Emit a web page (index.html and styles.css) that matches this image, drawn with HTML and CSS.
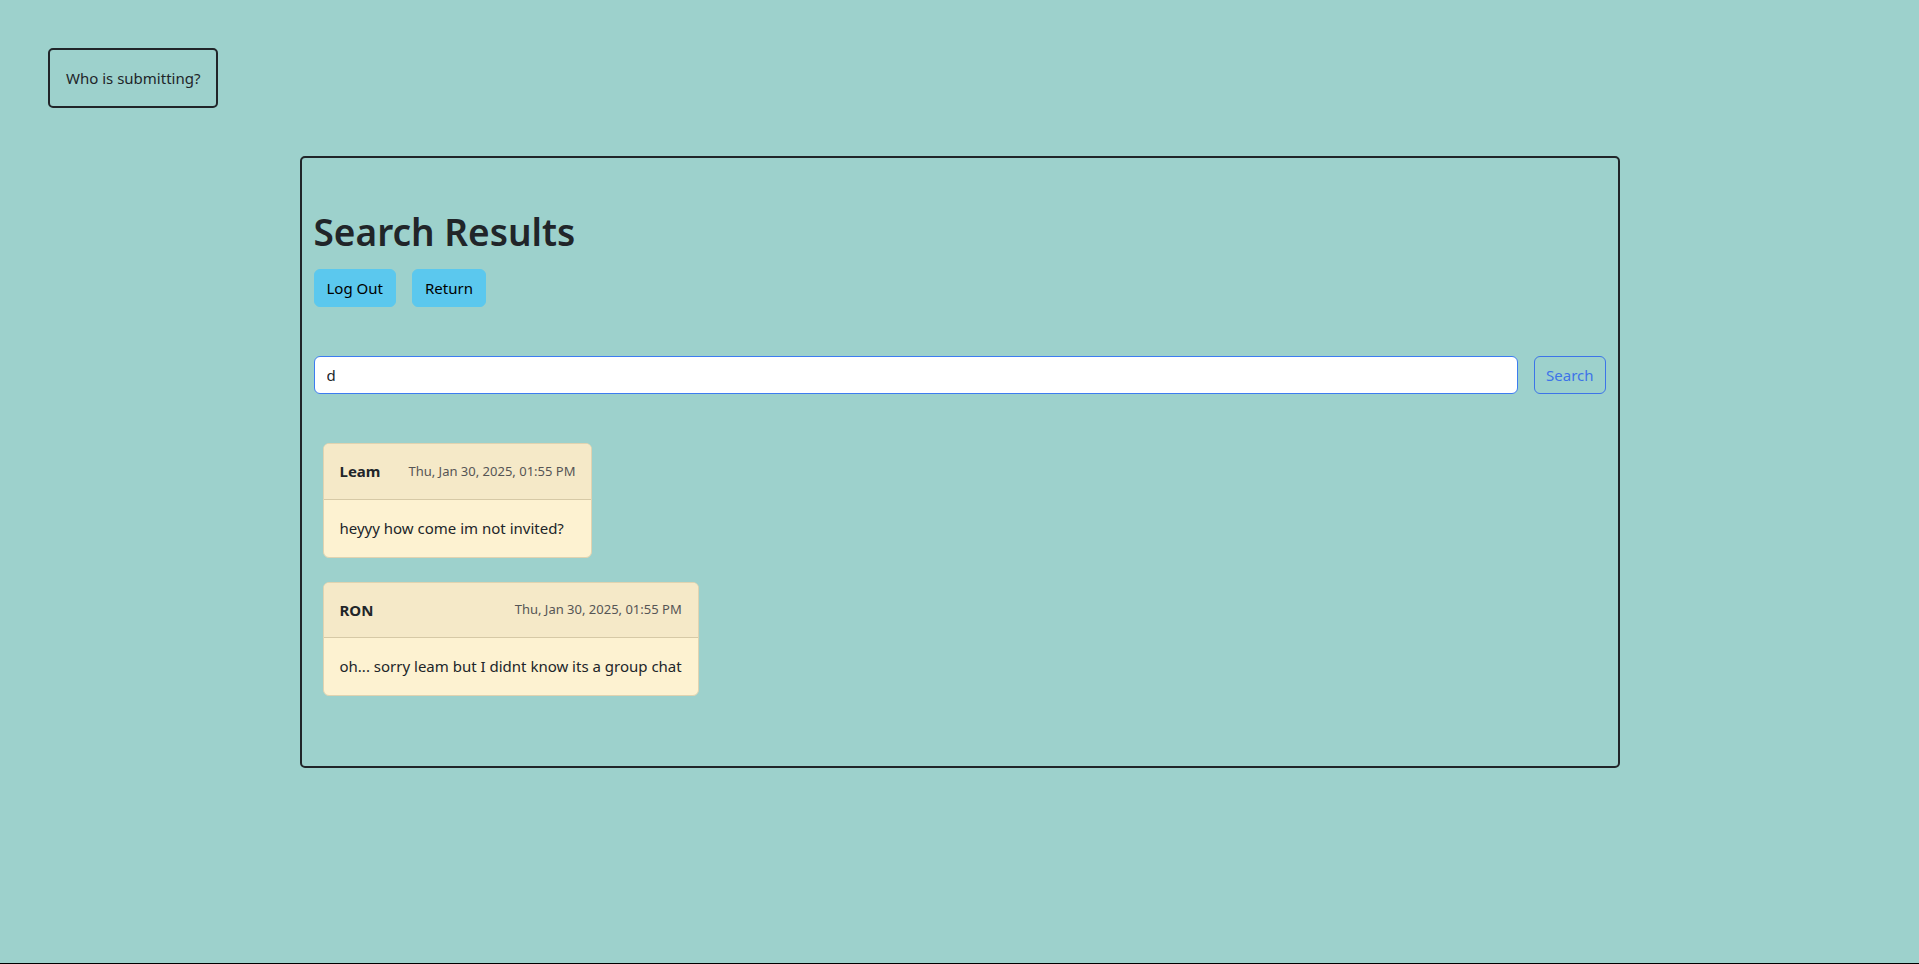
FILE: index.html
```html
<!DOCTYPE html>
<html lang="en">
<head>
<meta charset="utf-8">
<title>Search Results</title>
<link rel="stylesheet" href="styles.css">
</head>
<body>
<div class="page">
  <div class="top">
    <div class="who">Who is submitting?</div>
  </div>
  <main class="panel">
    <h1 class="title">Search Results</h1>
    <div class="actions">
      <button class="btn-info" type="button">Log Out</button>
      <button class="btn-info" type="button">Return</button>
    </div>
    <form class="search">
      <input class="search-input" type="text" value="d">
      <button class="search-btn" type="button">Search</button>
    </form>
    <div class="results">
      <div class="card">
        <div class="card-header">
          <span class="name">Leam</span>
          <span class="date">Thu, Jan 30, 2025, 01:55 PM</span>
        </div>
        <div class="card-body">heyyy how come im not invited?</div>
      </div>
      <div class="card">
        <div class="card-header">
          <span class="name">RON</span>
          <span class="date">Thu, Jan 30, 2025, 01:55 PM</span>
        </div>
        <div class="card-body">oh... sorry leam but I didnt know its a group chat</div>
      </div>
    </div>
  </main>
</div>
<div class="bottom-line"></div>
</body>
</html>
```
FILE: styles.css
```css
* { box-sizing: border-box; }
html, body { margin: 0; padding: 0; }
body {
  background: #9dd1cc;
  color: #212529;
  font-family: "Noto Sans", "Open Sans", sans-serif;
  font-size: 16px;
  line-height: 1.5;
}
.page {
  min-height: calc(100vh - 1px);
  padding: 48px 0 0;
}
.top {
  display: flex;
  padding-left: 48px;
}
.who {
  border: 2px solid #212529;
  border-radius: 5px;
  padding: 16px;
  font-size: 15px;
  line-height: 24px;
}
.panel {
  width: 1320px;
  margin: 48px auto 0;
  border: 2px solid #212529;
  border-radius: 5px;
  padding: 52px 12px 70px;
  display: flex;
  flex-direction: column;
}
.title {
  margin: 0 0 15px;
  font-size: 37px;
  font-weight: 600;
  line-height: 1.2;
}
.actions {
  display: flex;
  gap: 16px;
}
.btn-info {
  font: inherit;
  font-size: 15px;
  line-height: 24px;
  background: #5bc8ee;
  color: #000;
  border: 1px solid #5bc8ee;
  border-radius: 6px;
  padding: 6px 12px;
  cursor: pointer;
}
.search {
  margin: 49px 0 0;
  display: flex;
  gap: 16px;
}
.search-input {
  flex: 1;
  font: inherit;
  font-size: 15px;
  color: #212529;
  background: #fff;
  border: 1px solid #3d7cf0;
  border-radius: 6px;
  padding: 6px 12px;
  line-height: 24px;
  outline: none;
}
.search-btn {
  font: inherit;
  font-size: 15px;
  line-height: 24px;
  color: #3d74e8;
  background: transparent;
  border: 1px solid #3d74e8;
  border-radius: 6px;
  padding: 6px 11px;
}
.results {
  margin: 49px 0 0 9px;
  display: flex;
  flex-direction: column;
  align-items: flex-start;
  gap: 24px;
}
.card {
  border: 1px solid #e0d3b0;
  border-radius: 6px;
  overflow: hidden;
  background: #fdf2d1;
}
.card-header {
  display: flex;
  justify-content: space-between;
  align-items: center;
  gap: 28px;
  padding: 16px;
  background: #f5e9c8;
  border-bottom: 1px solid #d6c9a6;
}
.name {
  font-weight: 700;
  font-size: 15px;
}
.date {
  font-size: 13px;
  color: #555;
}
.card-body {
  padding: 16px 16px 17px;
  font-size: 15px;
  line-height: 24px;
}
.bottom-line {
  border-top: 1px solid #000;
}
```
